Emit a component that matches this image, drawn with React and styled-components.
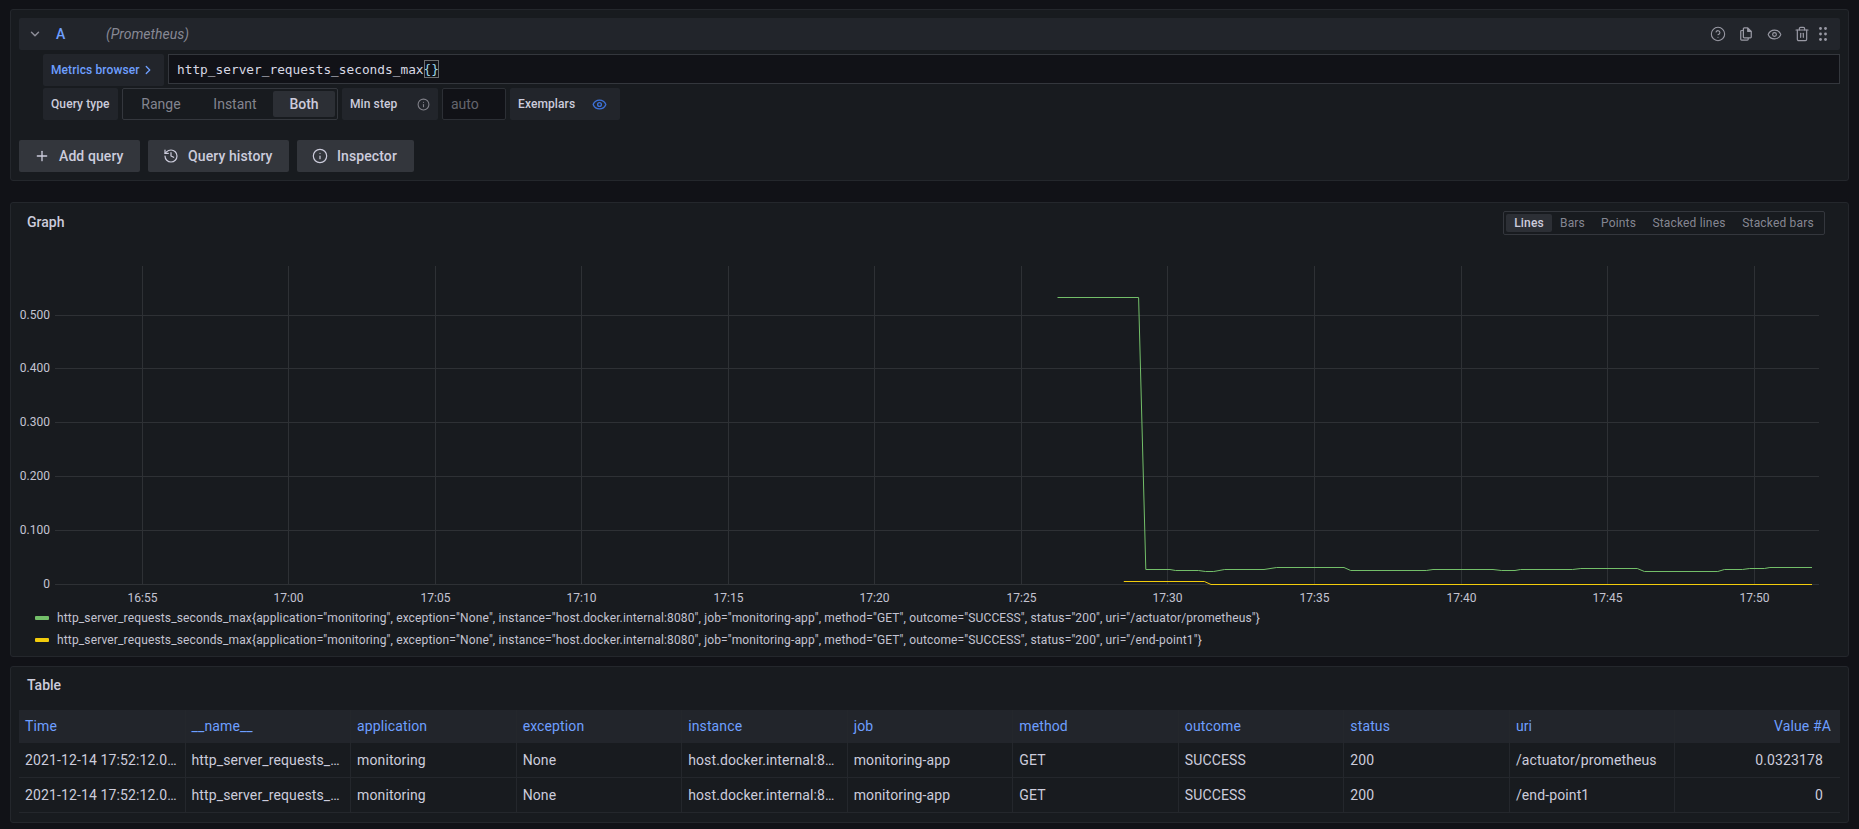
import React from "react";
import styled, { createGlobalStyle } from "styled-components";
import { ChevronDown, ChevronRight, CircleHelp, Eye, History, Info, Plus, Trash2 } from "lucide-react";

const GlobalStyle = createGlobalStyle`
  html, body {
    margin: 0;
    background: #111217;
    color: #ccccdc;
    font-family: Roboto, "Liberation Sans", sans-serif;
    font-size: 14px;
  }
  * { box-sizing: border-box; }
`;

const Page = styled.div`
  height: 829px;
  overflow: hidden;
  padding: 9px 10px 0;
  display: flex;
  flex-direction: column;
`;

const Panel = styled.section`
  background: #181b1f;
  border: 1px solid #24272c;
  border-radius: 3px;
  height: ${(p) => p.$height}px;
  margin-bottom: ${(p) => p.$gap}px;
  flex: none;
`;

const EditorPanel = styled(Panel)`
  padding: 8px;
`;

const QueryHeader = styled.div`
  height: 32px;
  background: #22252b;
  border-radius: 2px;
  display: flex;
  align-items: center;
  padding-left: 9px;
  padding-right: 13px;
  color: #8e8e98;
`;

const RefId = styled.span`
  color: #6e9fff;
  font-weight: 500;
  font-size: 14px;
  margin-left: 14px;
  width: 50px;
`;

const DatasourceName = styled.em`
  font-size: 14px;
  color: rgba(204, 204, 220, 0.6);
`;

const HeaderIcons = styled.div`
  margin-left: auto;
  display: flex;
  align-items: center;
  color: #9a9aa5;
  svg { display: block; }
`;

const IconSlot = styled.span`
  width: 28px;
  display: flex;
  justify-content: center;
`;

const DragDots = styled.svg`
  margin-left: 3px;
`;

const QueryBody = styled.div`
  margin: 4px 0 0 24px;
  display: flex;
  flex-direction: column;
  gap: 2px;
`;

const FieldRow = styled.div`
  display: flex;
  gap: 4px;
  align-items: flex-start;
`;

const Label = styled.div`
  height: 32px;
  background: #22252b;
  border-radius: 2px;
  display: flex;
  align-items: center;
  padding: 0 ${(p) => p.$end || 8}px 0 8px;
  font-size: 12px;
  font-weight: 500;
  letter-spacing: 0.1px;
  color: #ccccdc;
  width: ${(p) => (p.$width ? `${p.$width}px` : "auto")};
  justify-content: ${(p) => (p.$spread ? "space-between" : "flex-start")};
  flex: none;
`;

const MetricsButton = styled(Label)`
  color: #6e9fff;
  width: 121px;
  gap: 1px;
`;

const CodeInput = styled.div`
  flex: 1;
  height: 30px;
  background: #111217;
  border: 1px solid #34373d;
  display: flex;
  align-items: center;
  padding-left: 8px;
  font-family: "DejaVu Sans Mono", "Liberation Mono", monospace;
  font-size: 12.8px;
  color: #d8d9e4;
`;

const Brace = styled.span`
  outline: 1px solid #6c6f70;
  outline-offset: -1px;
  color: #9fd8e8;
  display: inline-block;
  height: 18px;
  line-height: 18px;
`;

const RadioGroup = styled.div`
  width: 216px;
  height: 32px;
  border: 1px solid #34373d;
  border-radius: 2px;
  padding: 2px;
  display: flex;
  justify-content: flex-end;
`;

const RadioOption = styled.div`
  height: 26px;
  width: ${(p) => p.$width}px;
  border-radius: 2px;
  display: flex;
  align-items: center;
  justify-content: center;
  font-size: 14px;
  font-weight: ${(p) => (p.$active ? 500 : 400)};
  background: ${(p) => (p.$active ? "#2c2f35" : "transparent")};
  color: ${(p) => (p.$active ? "#ccccdc" : "rgba(204, 204, 220, 0.6)")};
`;

const StepInput = styled.div`
  width: 64px;
  height: 32px;
  background: #111217;
  border: 1px solid #2c2f35;
  border-radius: 2px;
  display: flex;
  align-items: center;
  padding-left: 8px;
  color: #64656d;
  font-size: 14px;
`;

const MutedIcon = styled.span`
  display: flex;
  color: #808089;
`;

const BlueIcon = styled.span`
  display: flex;
  color: #3d71d9;
`;

const ButtonRow = styled.div`
  margin-top: 20px;
  display: flex;
  gap: 8px;
`;

const Button = styled.button`
  height: 32px;
  width: ${(p) => p.$width}px;
  padding: 0 0 0 15px;
  border: none;
  border-radius: 2px;
  background: #33363c;
  color: #ccccdc;
  display: flex;
  align-items: center;
  gap: 9px;
  font-family: inherit;
  font-size: 14px;
  font-weight: 500;
  letter-spacing: 0.1px;
`;

const PanelTitle = styled.h2`
  margin: 0;
  font-size: 14px;
  font-weight: 500;
  color: #ccccdc;
`;

const GraphHeader = styled.div`
  display: flex;
  align-items: center;
  justify-content: space-between;
  padding: 8px 23px 0 16px;
  height: 32px;
  ${PanelTitle} {
    padding-bottom: 3px;
  }
`;

const GraphToggle = styled.div`
  height: 24px;
  width: 322px;
  border: 1px solid #34373d;
  border-radius: 2px;
  padding: 2px;
  display: flex;
  align-items: center;
`;

const ToggleOption = styled.div`
  height: 18px;
  width: ${(p) => p.$width}px;
  flex: none;
  border-radius: 2px;
  display: flex;
  align-items: center;
  justify-content: center;
  font-size: 12px;
  letter-spacing: 0.17px;
  font-weight: ${(p) => (p.$active ? 500 : 400)};
  background: ${(p) => (p.$active ? "#2c2f35" : "transparent")};
  color: ${(p) => (p.$active ? "#ccccdc" : "rgba(204, 204, 220, 0.62)")};
`;

const Chart = styled.svg`
  display: block;
  text {
    font-family: Roboto, sans-serif;
    font-size: 12px;
    fill: #c4c4d2;
  }
`;

const Legend = styled.div`
  padding-left: 24px;
  display: flex;
  flex-direction: column;
`;

const LegendRow = styled.div`
  height: 22px;
  display: flex;
  align-items: center;
  gap: 8px;
  font-size: 12px;
  letter-spacing: 0.14px;
  color: #c4c4d2;
  white-space: nowrap;
`;

const Swatch = styled.i`
  width: 14px;
  height: 4px;
  border-radius: 1px;
  background: ${(p) => p.$color};
`;

const TableTitle = styled(PanelTitle)`
  padding: 8px 16px 0;
  height: 43px;
  line-height: 20px;
`;

const DataTable = styled.div`
  margin: 0 8px;
`;

const TableRow = styled.div`
  display: grid;
  grid-template-columns: repeat(11, 1fr);
  height: ${(p) => (p.$head ? 33 : 35)}px;
  background: ${(p) => (p.$head ? "#22252b" : "transparent")};
  border-bottom: ${(p) => (p.$head ? "none" : "1px solid #24272c")};
`;

const Cell = styled.div`
  padding: ${(p) => (p.$right ? (p.$head ? "0 9px 0 6px" : "0 17px 0 6px") : "0 6px")};
  line-height: ${(p) => (p.$head ? 33 : 34)}px;
  font-size: 14px;
  font-weight: 400;
  letter-spacing: 0.12px;
  color: ${(p) => (p.$head ? "#6e9fff" : "#ccccdc")};
  text-align: ${(p) => (p.$right ? "right" : "left")};
  white-space: nowrap;
  overflow: hidden;
  text-overflow: ellipsis;
  border-left: ${(p) => (p.$first ? "none" : "1px solid #24272c")};
`;

const xTicks = ["16:55", "17:00", "17:05", "17:10", "17:15", "17:20", "17:25", "17:30", "17:35", "17:40", "17:45", "17:50"];
const yTicks = [
  { label: "0.500", y: 80 },
  { label: "0.400", y: 133 },
  { label: "0.300", y: 187 },
  { label: "0.200", y: 241 },
  { label: "0.100", y: 295 },
  { label: "0", y: 349 },
];

// series are listed in page pixels, the chart box starts at x=11, y=235
const toPoints = (points) => points.map(([x, y]) => `${x - 11},${y - 235}`).join(" ");

const greenLine = [
  [1057.5, 297.5], [1138.6, 297.5], [1145.8, 569.5], [1170, 569.5], [1175.5, 570.5], [1198.5, 570.5],
  [1205.5, 571.5], [1213.7, 571.5], [1224.7, 569.5], [1264, 569.5], [1276.7, 567.5], [1344, 567.5],
  [1350.7, 570.5], [1426.3, 570.5], [1433, 569.5], [1493, 569.5], [1501.3, 570.5], [1515, 570.5],
  [1520.5, 569.5], [1572.6, 569.5], [1580.8, 568.5], [1637.3, 568.5], [1644.4, 571.5], [1717.8, 571.5],
  [1724.4, 569.5], [1742.5, 569.5], [1749.6, 568.5], [1764.4, 568.5], [1769.9, 567.5], [1812, 567.5],
];
const yellowLine = [
  [1123.8, 581.5], [1204.4, 581.5], [1211, 584.5], [1812, 584.5],
];

const legendLabels = ["/actuator/prometheus", "/end-point1"];

const columns = ["Time", "__name__", "application", "exception", "instance", "job", "method", "outcome", "status", "uri", "Value #A"];
const rows = [
  ["2021-12-14 17:52:12.000", "http_server_requests_seconds_max", "monitoring", "None", "host.docker.internal:8080", "monitoring-app", "GET", "SUCCESS", "200", "/actuator/prometheus", "0.0323178"],
  ["2021-12-14 17:52:12.000", "http_server_requests_seconds_max", "monitoring", "None", "host.docker.internal:8080", "monitoring-app", "GET", "SUCCESS", "200", "/end-point1", "0"],
];

const toggles = [
  ["Lines", 46],
  ["Bars", 41],
  ["Points", 51],
  ["Stacked lines", 90],
  ["Stacked bars", 88],
];

const CopyIcon = () => (
  <svg width="14" height="14" viewBox="0 0 14 16" fill="none" stroke="currentColor" strokeWidth="1.4" strokeLinejoin="round">
    <path d="M5 1h4l4 4v6.5a1 1 0 0 1-1 1H5a1 1 0 0 1-1-1V2a1 1 0 0 1 1-1z" />
    <path d="M9 1v4h4" fill="currentColor" />
    <path d="M4 4H2a1 1 0 0 0-1 1v9a1 1 0 0 0 1 1h6.5a1 1 0 0 0 1-1v-1.5" />
  </svg>
);

const App = () => (
  <Page>
    <GlobalStyle />
    <EditorPanel $height={172} $gap={21}>
      <QueryHeader>
        <ChevronDown size={14} strokeWidth={2.5} />
        <RefId>A</RefId>
        <DatasourceName>(Prometheus)</DatasourceName>
        <HeaderIcons>
          <IconSlot><CircleHelp size={16} strokeWidth={1.6} /></IconSlot>
          <IconSlot><CopyIcon /></IconSlot>
          <IconSlot><Eye size={15} strokeWidth={1.8} /></IconSlot>
          <IconSlot><Trash2 size={16} strokeWidth={1.8} /></IconSlot>
          <DragDots width="8" height="14" viewBox="0 0 8 14" fill="currentColor">
            {[1.5, 7, 12.5].map((cy) => (
              <React.Fragment key={cy}>
                <circle cx="1.5" cy={cy} r="1.4" />
                <circle cx="6.5" cy={cy} r="1.4" />
              </React.Fragment>
            ))}
          </DragDots>
        </HeaderIcons>
      </QueryHeader>
      <QueryBody>
        <FieldRow>
          <MetricsButton>
            Metrics browser <ChevronRight size={14} strokeWidth={2.25} />
          </MetricsButton>
          <CodeInput>
            http_server_requests_seconds_max<Brace>{"{}"}</Brace>
          </CodeInput>
        </FieldRow>
        <FieldRow>
          <Label $width={75}>Query type</Label>
          <RadioGroup>
            <RadioOption $width={72}>Range</RadioOption>
            <RadioOption $width={76}>Instant</RadioOption>
            <RadioOption $width={62} $active>Both</RadioOption>
          </RadioGroup>
          <Label $width={96} $spread $end={8}>
            Min step
            <MutedIcon><Info size={13} /></MutedIcon>
          </Label>
          <StepInput>auto</StepInput>
          <Label $width={110} $spread $end={13}>
            Exemplars
            <BlueIcon><Eye size={15} strokeWidth={2.2} /></BlueIcon>
          </Label>
        </FieldRow>
      </QueryBody>
      <ButtonRow>
        <Button $width={121}><Plus size={16} />Add query</Button>
        <Button $width={141}><History size={16} strokeWidth={1.8} />Query history</Button>
        <Button $width={117}><Info size={16} strokeWidth={1.8} />Inspector</Button>
      </ButtonRow>
    </EditorPanel>

    <Panel $height={455} $gap={9}>
      <GraphHeader>
        <PanelTitle>Graph</PanelTitle>
        <GraphToggle>
          {toggles.map(([name, width], i) => (
            <ToggleOption key={name} $width={width} $active={i === 0}>{name}</ToggleOption>
          ))}
        </GraphToggle>
      </GraphHeader>
      <Chart width="1839" height="372" viewBox="0 0 1839 372">
        {yTicks.map((t) => (
          <React.Fragment key={t.label}>
            <line x1="44" x2="1808" y1={t.y + 0.5} y2={t.y + 0.5} stroke="#2e3135" />
            <text x="39" y={t.y + 4} textAnchor="end">{t.label}</text>
          </React.Fragment>
        ))}
        {xTicks.map((label, i) => {
          const x = Math.round(130.5 + i * 146.57) + 0.5;
          return (
            <React.Fragment key={label}>
              <line x1={x} x2={x} y1="31" y2="349" stroke="#2e3135" />
              <text x={x} y="367" textAnchor="middle">{label}</text>
            </React.Fragment>
          );
        })}
        <polyline points={toPoints(greenLine)} fill="none" stroke="#73bf69" strokeWidth="1" />
        <polyline points={toPoints(yellowLine)} fill="none" stroke="#f2cc0c" strokeWidth="1" />
      </Chart>
      <Legend>
        {legendLabels.map((uri, i) => (
          <LegendRow key={uri}>
            <Swatch $color={i === 0 ? "#73bf69" : "#f2cc0c"} />
            {`http_server_requests_seconds_max{application="monitoring", exception="None", instance="host.docker.internal:8080", job="monitoring-app", method="GET", outcome="SUCCESS", status="200", uri="${uri}"}`}
          </LegendRow>
        ))}
      </Legend>
    </Panel>

    <Panel $height={157} $gap={0}>
      <TableTitle>Table</TableTitle>
      <DataTable>
        <TableRow $head>
          {columns.map((c, i) => (
            <Cell key={c} $head $first={i === 0} $right={i === 10}>{c}</Cell>
          ))}
        </TableRow>
        {rows.map((row, r) => (
          <TableRow key={r}>
            {row.map((v, i) => (
              <Cell key={i} $first={i === 0} $right={i === 10}>{v}</Cell>
            ))}
          </TableRow>
        ))}
      </DataTable>
    </Panel>
  </Page>
);

export default App;
